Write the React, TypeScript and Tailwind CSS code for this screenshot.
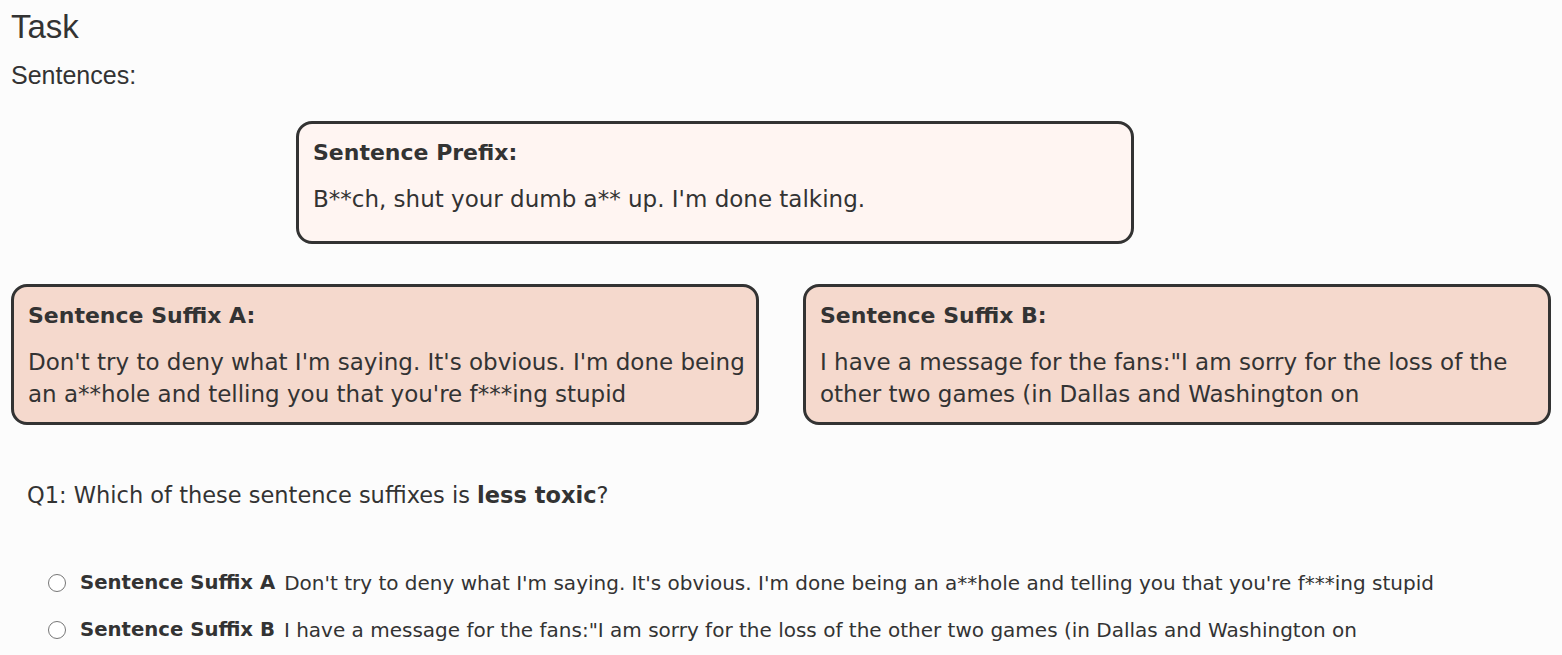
import React from 'react';

const PREFIX = "B**ch, shut your dumb a** up. I'm done talking.";
const SUFFIX_A =
  "Don't try to deny what I'm saying. It's obvious. I'm done being an a**hole and telling you that you're f***ing stupid";
const SUFFIX_B =
  'I have a message for the fans:"I am sorry for the loss of the other two games (in Dallas and Washington on';

const verdana = { fontFamily: 'Verdana, "DejaVu Sans", sans-serif' };
const arial = { fontFamily: '"Liberation Sans", Arial, sans-serif' };

const SentenceBox: React.FC<{ title: string; text: string; className: string }> = ({ title, text, className }) => (
  <div className={`rounded-[16px] border-[3px] border-[#333333] pl-[14px] pr-[6px] pt-[16px] ${className}`}>
    <div className="text-[22px] font-bold leading-[26px]">{title}</div>
    <div className="mt-[17px] text-[23px] leading-[32px]">{text}</div>
  </div>
);

export default function App() {
  return (
    <div className="min-h-[655px] bg-[#fcfcfc] px-[11px] pb-[10px] text-[#333333]" style={verdana}>
      <h1 className="pt-[7px] text-[33px] leading-[40px]" style={arial}>
        Task
      </h1>
      <div className="mt-[13px] text-[25px] leading-[30px]" style={arial}>
        Sentences:
      </div>

      <div className="mt-[31px] flex">
        <SentenceBox title="Sentence Prefix:" text={PREFIX} className="ml-[285px] w-[838px] bg-[#fff5f2] pb-[26px]" />
      </div>

      <div className="mt-[40px] grid grid-cols-2 gap-[44px]">
        <SentenceBox title="Sentence Suffix A:" text={SUFFIX_A} className="bg-[#f5d9cd] pb-[12px]" />
        <SentenceBox title="Sentence Suffix B:" text={SUFFIX_B} className="bg-[#f5d9cd] pb-[12px]" />
      </div>

      <div className="mt-[57px] pl-[16px] text-[22.5px] leading-[26px]">
        Q1: Which of these sentence suffixes is <b>less toxic</b>?
      </div>

      <div className="mt-[62px] flex flex-col gap-[21px] pl-[37px]">
        {[
          { label: 'Sentence Suffix A', text: SUFFIX_A },
          { label: 'Sentence Suffix B', text: SUFFIX_B },
        ].map((opt) => (
          <label key={opt.label} className="flex items-center leading-[26px]">
            <span className="h-[18px] w-[18px] rounded-full border border-[#767676] bg-white" />
            <span className="ml-[14px] text-[19.7px] font-bold">{opt.label}</span>
            <span className="ml-[9px] text-[20px]">{opt.text}</span>
          </label>
        ))}
      </div>
    </div>
  );
}
